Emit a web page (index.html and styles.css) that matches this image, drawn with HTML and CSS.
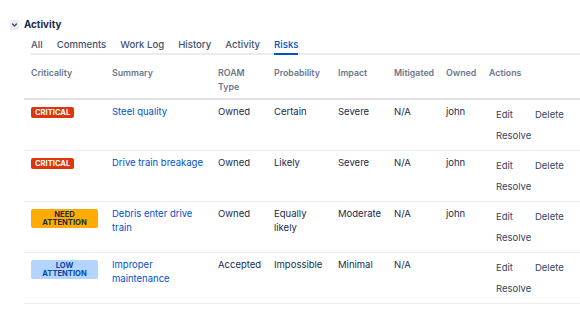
FILE: index.html
```html
<!DOCTYPE html>
<html lang="en">
<head>
    <meta charset="UTF-8">
    <meta name="viewport" content="width=device-width, initial-scale=1.0">
    <title>Activity - Risks</title>
    <link rel="stylesheet" href="styles.css">
</head>
<body>
    <section class="activity">
        <div class="activity-head">
            <span class="toggle">
                <svg width="9" height="10" viewBox="0 0 9 10">
                    <path d="M2.5 4 L4.5 6 L6.5 4" fill="none" stroke="#42526e" stroke-width="1.4" stroke-linecap="round" stroke-linejoin="round"/>
                </svg>
            </span>
            <h2>Activity</h2>
        </div>

        <ul class="tabs">
            <li>All</li>
            <li>Comments</li>
            <li>Work Log</li>
            <li>History</li>
            <li>Activity</li>
            <li class="active">Risks</li>
        </ul>

        <table class="risks">
            <colgroup>
                <col class="c-crit">
                <col class="c-sum">
                <col class="c-roam">
                <col class="c-prob">
                <col class="c-imp">
                <col class="c-mit">
                <col class="c-own">
                <col class="c-act">
            </colgroup>
            <thead>
                <tr>
                    <th>Criticality</th>
                    <th>Summary</th>
                    <th>ROAM Type</th>
                    <th>Probability</th>
                    <th>Impact</th>
                    <th>Mitigated</th>
                    <th>Owned</th>
                    <th>Actions</th>
                </tr>
            </thead>
            <tbody>
                <tr>
                    <td><span class="lozenge critical">Critical</span></td>
                    <td><a href="#">Steel quality</a></td>
                    <td>Owned</td>
                    <td>Certain</td>
                    <td>Severe</td>
                    <td>N/A</td>
                    <td>john</td>
                    <td>
                        <div class="actions">
                            <button>Edit</button>
                            <button>Delete</button>
                            <button>Resolve</button>
                        </div>
                    </td>
                </tr>
                <tr>
                    <td><span class="lozenge critical">Critical</span></td>
                    <td><a href="#">Drive train breakage</a></td>
                    <td>Owned</td>
                    <td>Likely</td>
                    <td>Severe</td>
                    <td>N/A</td>
                    <td>john</td>
                    <td>
                        <div class="actions">
                            <button>Edit</button>
                            <button>Delete</button>
                            <button>Resolve</button>
                        </div>
                    </td>
                </tr>
                <tr>
                    <td><span class="lozenge need">Need attention</span></td>
                    <td><a href="#">Debris enter drive train</a></td>
                    <td>Owned</td>
                    <td>Equally likely</td>
                    <td>Moderate</td>
                    <td>N/A</td>
                    <td>john</td>
                    <td>
                        <div class="actions">
                            <button>Edit</button>
                            <button>Delete</button>
                            <button>Resolve</button>
                        </div>
                    </td>
                </tr>
                <tr>
                    <td><span class="lozenge low">Low attention</span></td>
                    <td><a href="#">Improper maintenance</a></td>
                    <td>Accepted</td>
                    <td>Impossible</td>
                    <td>Minimal</td>
                    <td>N/A</td>
                    <td></td>
                    <td>
                        <div class="actions">
                            <button>Edit</button>
                            <button>Delete</button>
                            <button>Resolve</button>
                        </div>
                    </td>
                </tr>
            </tbody>
        </table>
    </section>
</body>
</html>
```

FILE: styles.css
```css
body {
    margin: 0;
    font-family: Inter, "Liberation Sans", sans-serif;
    font-size: 9.5px;
    color: #172b4d;
    background: #fff;
    overflow: hidden;
}

.activity {
    padding-top: 18px;
}

.activity-head {
    display: flex;
    align-items: center;
    gap: 5px;
    padding-left: 10px;
    height: 14px;
}

.toggle {
    display: flex;
    width: 9px;
    height: 10px;
    background-color: #ebecf0;
    border-radius: 2px;
}

.activity-head h2 {
    margin: 0;
    font-size: 9.8px;
    font-weight: 700;
    line-height: 14px;
}

.tabs {
    display: flex;
    gap: 14px;
    list-style: none;
    margin: 6px 0 0 31px;
    padding: 0;
    border-bottom: 2px solid #ebecf0;
}

.tabs li {
    font-size: 9.6px;
    font-weight: 500;
    line-height: 14px;
    color: #42526e;
    padding-bottom: 1px;
    border-bottom: 2px solid transparent;
    margin-bottom: -2px;
}

.tabs li.active {
    color: #0052cc;
    border-bottom-color: #0052cc;
}

.risks {
    margin: 7px 0 0 24px;
    width: 556px;
    border-collapse: collapse;
    table-layout: fixed;
}

.c-crit { width: 81px; }
.c-sum { width: 106px; }
.c-roam { width: 56px; }
.c-prob { width: 64px; }
.c-imp { width: 56px; }
.c-mit { width: 52px; }
.c-own { width: 43px; }
.c-act { width: 98px; }

.risks th {
    text-align: left;
    vertical-align: top;
    padding: 4px 7px;
    font-size: 8.8px;
    font-weight: 600;
    line-height: 14px;
    color: #6b778c;
    border-bottom: 2px solid #dfe1e6;
}

.risks td {
    vertical-align: top;
    padding: 5px 7px 4px;
    line-height: 14px;
    border-bottom: 1px solid #ebecf0;
}

.risks a {
    color: #0052cc;
    text-decoration: none;
}

.lozenge {
    display: inline-block;
    margin-top: 2px;
    padding: 1.5px 4px;
    border-radius: 2px;
    font-size: 7.6px;
    font-weight: 700;
    line-height: 8px;
    text-transform: uppercase;
    text-align: center;
    vertical-align: top;
}

.critical {
    background-color: #de350b;
    color: #fff;
}

.need,
.low {
    width: 59px;
}

.need {
    background-color: #ffab00;
    color: #172b4d;
}

.low {
    background-color: #b3d4ff;
    color: #0747a6;
}

.actions {
    display: flex;
    flex-wrap: wrap;
    column-gap: 8px;
    row-gap: 1px;
}

.actions button {
    font: inherit;
    height: 20px;
    line-height: 20px;
    padding: 0 7px;
    border: none;
    background: none;
    color: #344563;
    cursor: pointer;
}
```
